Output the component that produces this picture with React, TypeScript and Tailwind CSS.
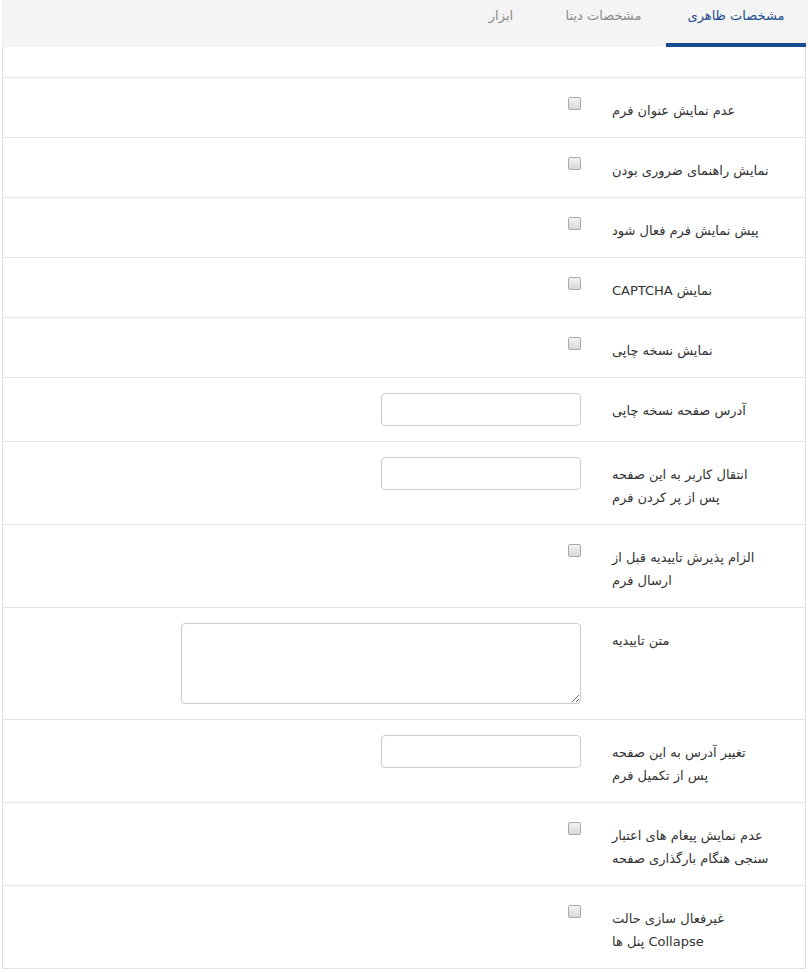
type Row = {
  label: string[];
  control: "check" | "input" | "textarea";
};

const rows: Row[] = [
  { label: ["عدم نمایش عنوان فرم"], control: "check" },
  { label: ["نمایش راهنمای ضروری بودن"], control: "check" },
  { label: ["پیش نمایش فرم فعال شود"], control: "check" },
  { label: ["نمایش CAPTCHA"], control: "check" },
  { label: ["نمایش نسخه چاپی"], control: "check" },
  { label: ["آدرس صفحه نسخه چاپی"], control: "input" },
  { label: ["انتقال کاربر به این صفحه", "پس از پر کردن فرم"], control: "input" },
  { label: ["الزام پذیرش تاییدیه قبل از", "ارسال فرم"], control: "check" },
  { label: ["متن تاییدیه"], control: "textarea" },
  { label: ["تغییر آدرس به این صفحه", "پس از تکمیل فرم"], control: "input" },
  { label: ["عدم نمایش پیغام های اعتبار", "سنجی هنگام بارگذاری صفحه"], control: "check" },
  { label: ["غیرفعال سازی حالت", "Collapse پنل ها"], control: "check" },
];

function Control({ kind }: { kind: Row["control"] }) {
  if (kind === "check") {
    return (
      <span className="mt-[4px] block w-[13px] h-[13px] rounded-[2px] border border-[#a9a9a9] bg-gradient-to-b from-[#f4f4f4] to-[#d8d8d8]" />
    );
  }
  if (kind === "input") {
    return (
      <input
        type="text"
        className="block w-[200px] h-[33px] rounded-[4px] border border-[#cccccc] bg-white px-3 outline-none"
      />
    );
  }
  return (
    <textarea
      dir="ltr"
      className="block w-[400px] h-[81px] rounded-[4px] border border-[#cccccc] bg-white px-3 outline-none"
    />
  );
}

export default function App() {
  return (
    <div
      dir="rtl"
      className="w-[808px] h-[972px] bg-white text-[13px] text-[#333333]"
      style={{ fontFamily: '"DejaVu Sans", "Noto Sans", sans-serif' }}
    >
      {/* Tabs */}
      <div className="ml-[2px] h-[47px] bg-[#f4f4f4] flex">
        <div className="mr-[2px] w-[140px] text-center pt-[6px] leading-5 text-[#1d4d8f] border-b-[4px] border-[#1a4a92]">
          مشخصات ظاهری
        </div>
        <div className="w-[125px] text-center pt-[6px] leading-5 text-[#8a8a8a]">مشخصات دیتا</div>
        <div className="w-[80px] text-center pt-[6px] leading-5 text-[#8a8a8a]">ابزار</div>
      </div>

      {/* Panel */}
      <div className="ml-[2px] mr-[2px] border-x border-[#dddddd]">
        <div className="h-[30px]" />
        {rows.map((row, i) => (
          <div
            key={i}
            className={
              "flex items-start gap-[31px] pr-[23px] py-[15px] border-t border-[#e3e3e3]" +
              (i === rows.length - 1 ? " border-b" : "")
            }
          >
            <div className="w-[170px] text-left pt-[6px] leading-[23px] whitespace-nowrap">
              {row.label.map((line, j) => (
                <div key={j}>{line}</div>
              ))}
            </div>
            <Control kind={row.control} />
          </div>
        ))}
      </div>
    </div>
  );
}
